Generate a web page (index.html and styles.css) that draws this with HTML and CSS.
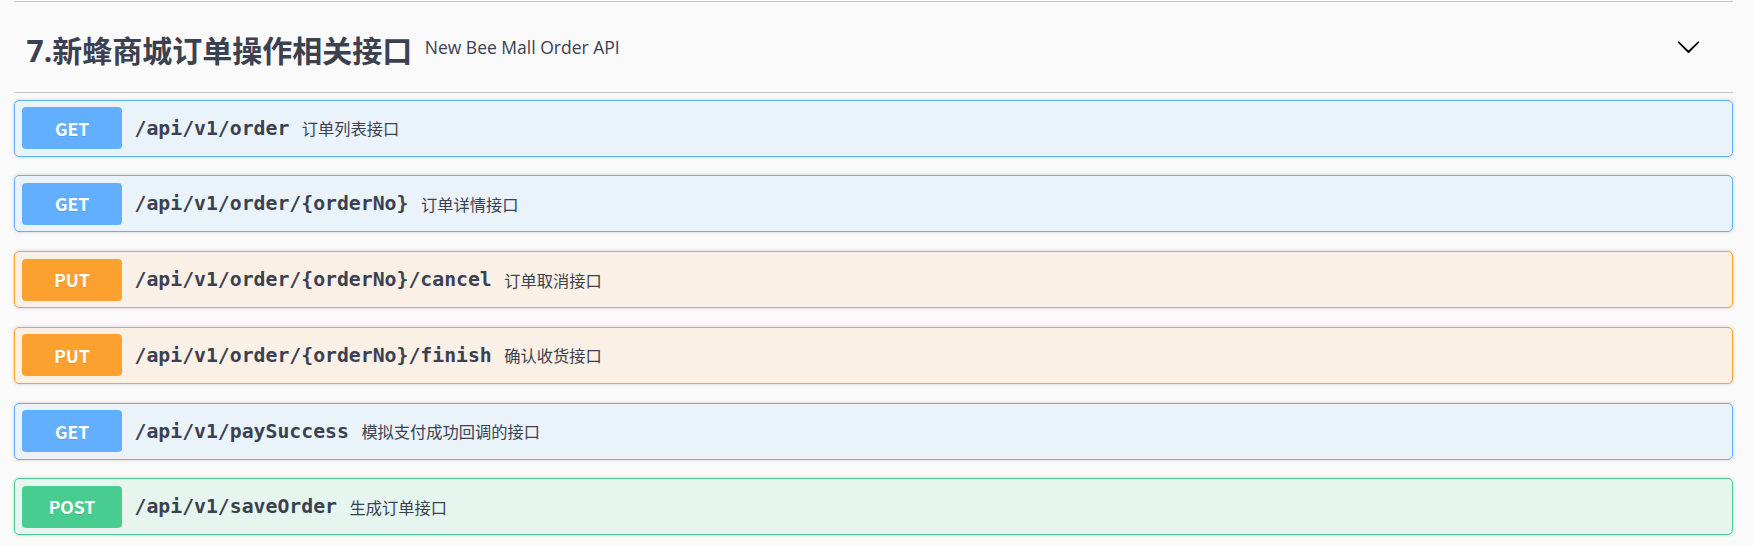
FILE: index.html
```html
<!DOCTYPE html>
<html lang="zh-CN">
<head>
<meta charset="utf-8">
<title>New Bee Mall Order API</title>
<link rel="stylesheet" href="styles.css">
</head>
<body>
<div class="wrapper">
  <div class="prev-line"></div>
  <section class="tag-section">
    <h4 class="tag-header">
      <span class="tag-title">7.新蜂商城订单操作相关接口</span>
      <small class="tag-desc">New Bee Mall Order API</small>
      <button class="expand" aria-label="collapse">
        <svg viewBox="0 0 20 20" width="25" height="25"><path d="M17.418 6.109c.272-.268.709-.268.979 0s.271.701 0 .969l-7.908 7.83c-.27.268-.707.268-.979 0l-7.908-7.830c-.27-.268-.27-.701 0-.969.271-.268.709-.268.979 0L10 13.25l7.418-7.141z" fill="#000"/></svg>
      </button>
    </h4>
    <div class="ops">
      <div class="opblock get">
        <div class="summary"><span class="method">GET</span><span class="path">/api/v1/order</span><span class="desc">订单列表接口</span></div>
      </div>
      <div class="opblock get">
        <div class="summary"><span class="method">GET</span><span class="path">/api/v1/order/{orderNo}</span><span class="desc">订单详情接口</span></div>
      </div>
      <div class="opblock put">
        <div class="summary"><span class="method">PUT</span><span class="path">/api/v1/order/{orderNo}/cancel</span><span class="desc">订单取消接口</span></div>
      </div>
      <div class="opblock put">
        <div class="summary"><span class="method">PUT</span><span class="path">/api/v1/order/{orderNo}/finish</span><span class="desc">确认收货接口</span></div>
      </div>
      <div class="opblock get">
        <div class="summary"><span class="method">GET</span><span class="path">/api/v1/paySuccess</span><span class="desc">模拟支付成功回调的接口</span></div>
      </div>
      <div class="opblock post">
        <div class="summary"><span class="method">POST</span><span class="path">/api/v1/saveOrder</span><span class="desc">生成订单接口</span></div>
      </div>
    </div>
  </section>
</div>
</body>
</html>
```

FILE: styles.css
```css
html, body {
  margin: 0;
  padding: 0;
  background: #fafafa;
}
body {
  font-family: "Open Sans", "Noto Sans CJK SC", sans-serif;
  color: #3b4151;
}
.wrapper {
  padding-left: 14px;
  width: 1719px;
}
.prev-line {
  margin-top: 1px;
  height: 1px;
  background: #c4c6ca;
}
.tag-header {
  margin: 0;
  display: flex;
  align-items: center;
  height: 89.5px;
  padding: 0 32px 0 12.5px;
  border-bottom: 1px solid #c4c6ca;
}
.tag-title {
  font-family: "Open Sans", "Noto Sans CJK SC", sans-serif;
  font-weight: 700;
  font-size: 30px;
  color: #3b4151;
  padding-top: 5px;
}
.tag-desc {
  flex: 1;
  padding: 0 12.5px;
  font-size: 17.5px;
  font-weight: 400;
  color: #3b4151;
}
.expand {
  border: none;
  background: none;
  padding: 0;
  margin: 0;
  display: flex;
  width: 25px;
  height: 25px;
}
.ops {
  padding-top: 7px;
}
.opblock {
  border: 1px solid;
  border-radius: 5px;
  margin-bottom: 18.75px;
  box-shadow: 0 0 3.75px rgba(0, 0, 0, .19);
}
.summary {
  display: flex;
  align-items: center;
  padding: 6.5px 7px;
}
.method {
  width: 100px;
  height: 42px;
  border-radius: 4px;
  display: flex;
  align-items: center;
  justify-content: center;
  color: #fff;
  font-family: "Noto Sans CJK SC", sans-serif;
  font-weight: 700;
  font-size: 17.5px;
  text-shadow: 0 1px 0 rgba(0, 0, 0, .1);
}
.path {
  font-family: "DejaVu Sans Mono", monospace;
  font-weight: 700;
  font-size: 19.8px;
  padding: 0 12.5px;
  color: #3b4151;
}
.desc {
  font-family: "Noto Sans CJK SC", sans-serif;
  font-size: 16.25px;
  color: #3b4151;
}
.get { border-color: #61affe; background: rgba(97, 175, 254, .1); }
.get .method { background: #61affe; }
.put { border-color: #fca130; background: rgba(252, 161, 48, .1); }
.put .method { background: #fca130; }
.post { border-color: #49cc90; background: rgba(73, 204, 144, .1); }
.post .method { background: #49cc90; }
```
